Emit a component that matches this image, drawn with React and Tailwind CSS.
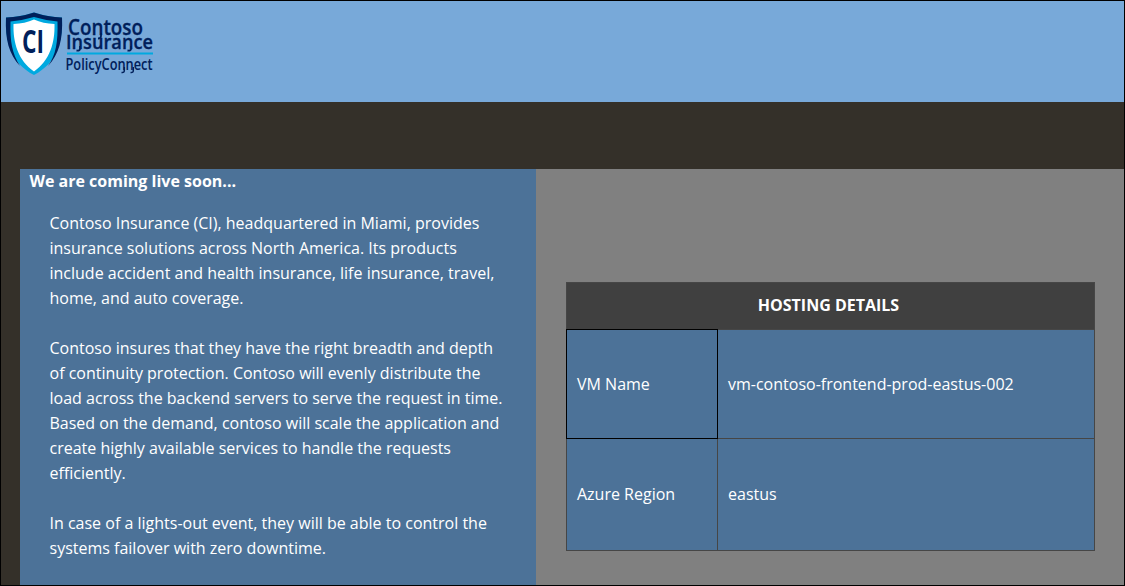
const hostingRows = [
  { label: 'Azure Region', value: 'eastus' },
];

function Logo() {
  return (
    <svg
      width="160"
      height="80"
      viewBox="0 0 160 80"
      className="block overflow-visible"
      role="img"
      aria-label="Contoso Insurance PolicyConnect"
    >
      <path d="M6 17.500 Q20 17 34 12.500 Q48 17 62 17.500 C63 42 57 63 34 75 C11 63 5 42 6 17.500Z" fill="#00a9e0" />
      <path d="M6 17.500 Q20 17 34 12.500 Q48 17 62 17.500 C63 40 59 54 48 66 C56 55 58 42 57.500 21.500 Q46 20.500 34 17 Q22 20.500 10.500 21.500 C10 42 12 53 20 66 C9 54 5 40 6 17.500Z" fill="#00205b" />
      <path d="M13.500 24 Q25 23.500 34 19.500 Q43 23.500 54.500 24 C55 43 50 60 34 71.500 C18 60 13 43 13.500 24Z" fill="#fff" />
      <g fill="#00205b" fontFamily="'Open Sans', sans-serif">
        <text x="22" y="53" fontSize="33" fontWeight="700" textLength="22" lengthAdjust="spacingAndGlyphs">CI</text>
        <text x="68" y="35" fontSize="21.500" fontWeight="600" stroke="#00205b" strokeWidth="0.3" textLength="75" lengthAdjust="spacingAndGlyphs">Contoso</text>
        <text x="66" y="48.500" fontSize="19" fontWeight="600" stroke="#00205b" strokeWidth="0.3" textLength="87" lengthAdjust="spacingAndGlyphs">Insurance</text>
        <text x="65.500" y="69.500" fontSize="15.500" fontWeight="600" textLength="87" lengthAdjust="spacingAndGlyphs">PolicyConnect</text>
      </g>
      {/* Hooked descenders on each n of the wordmark */}
      <g fill="none" stroke="#00205b" strokeWidth="1.800">
        <path d="M101 33V36Q101 38.500 98 38.500" />
        <path d="M80 46V49Q80 51 76.500 50.500" />
        <path d="M131 46V49Q131 51 127.500 50.500" />
        <path d="M124.300 67V70.500Q124.300 73 121.500 72.500" strokeWidth="1.500" />
        <path d="M133.300 67V70.500Q133.300 73 130.500 72.500" strokeWidth="1.500" />
      </g>
      <path d="M67 53.500H153" stroke="#00a9e0" strokeWidth="2" />
    </svg>
  );
}

export default function App() {
  return (
    <div className="flex h-[586px] w-[1125px] flex-col overflow-hidden border border-black bg-[#343029] font-['Open_Sans',sans-serif] text-base leading-[25px] text-white">
      <header className="h-[101px] shrink-0 bg-[#78a9d9]">
        <div className="-mt-px -ml-px">
          <Logo />
        </div>
      </header>
      <main className="mt-[67px] ml-[19px] flex flex-1">
        <section className="w-[516px] shrink-0 bg-[#4c7298]">
          <h1 className="pl-[9.500px] font-bold">We are coming live soon...</h1>
          <div className="mt-[17px] ml-[29.500px] flex w-[470px] flex-col gap-[25px]">
            <p>
              Contoso Insurance (CI), headquartered in Miami, provides<br />
              insurance solutions across North America. Its products<br />
              include accident and health insurance, life insurance, travel,<br />
              home, and auto coverage.
            </p>
            <p>
              Contoso insures that they have the right breadth and depth<br />
              of continuity protection. Contoso will evenly distribute the<br />
              load across the backend servers to serve the request in time.<br />
              Based on the demand, contoso will scale the application and<br />
              create highly available services to handle the requests<br />
              efficiently.
            </p>
            <p>
              In case of a lights-out event, they will be able to control the<br />
              systems failover with zero downtime.
            </p>
          </div>
        </section>
        <section className="flex-1 bg-[#808080] pt-[113px] pl-[30px]">
          <div className="w-[529px]">
            <h2 className="flex h-[47px] items-center justify-center border border-b-0 border-[#464646] bg-[#404040] font-bold">
              <span className="-mt-px pr-1">HOSTING DETAILS</span>
            </h2>
            <div className="flex h-[110px] bg-[#4c7298]">
              <div className="flex w-[152px] items-center border border-black pl-[10px]">VM Name</div>
              <div className="flex flex-1 items-center border-y border-r border-[#464646] pl-[10px]">
                vm-contoso-frontend-prod-eastus-002
              </div>
            </div>
            {hostingRows.map((row) => (
              <div key={row.label} className="flex h-[112px] border-x border-b border-[#464646] bg-[#4c7298]">
                <div className="flex w-[151px] items-center border-r border-[#464646] pl-[10px]">{row.label}</div>
                <div className="flex items-center pl-[10px]">{row.value}</div>
              </div>
            ))}
          </div>
        </section>
      </main>
    </div>
  );
}
